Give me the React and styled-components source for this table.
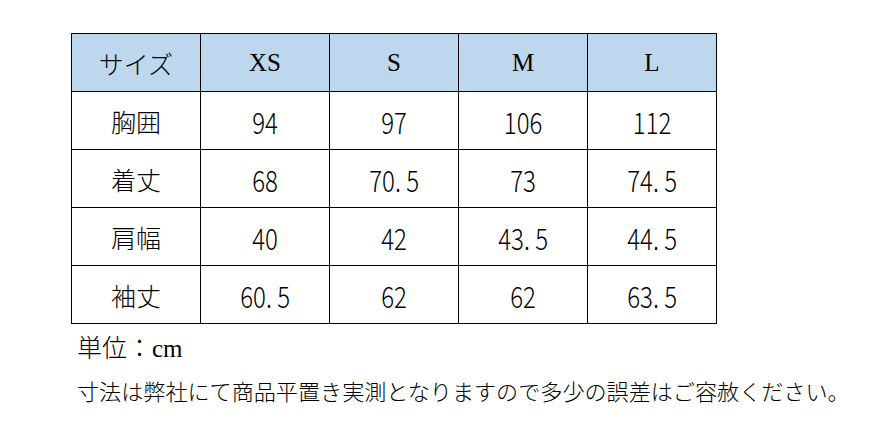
import React from 'react';
import styled, { createGlobalStyle } from 'styled-components';

const GlobalStyle = createGlobalStyle`
  html, body {
    margin: 0;
    padding: 0;
    background: #ffffff;
  }
`;

const Page = styled.div`
  padding: 33px 0 0 71px;
  width: 871px;
  height: 427px;
  box-sizing: border-box;
  color: #000;
`;

const Table = styled.table`
  border-collapse: collapse;
  table-layout: fixed;
`;

const Cell = styled.td`
  width: 128px;
  height: 57px;
  padding: 0;
  border: 1px solid #000;
  text-align: center;
  vertical-align: middle;
  background: ${(p) => (p.$head ? '#bdd7ee' : '#ffffff')};
`;

const HeadText = styled.span`
  font-family: 'Liberation Serif', 'Noto Sans CJK JP', serif;
  font-size: 25px;
  font-weight: 300;
`;

const Label = styled.span`
  font-family: 'Noto Sans CJK JP', sans-serif;
  font-size: 25px;
  font-weight: 300;
`;

const Num = styled.span`
  display: inline-block;
  font-family: 'Noto Sans CJK JP', sans-serif;
  font-size: 30px;
  font-weight: 300;
  transform: scaleX(0.8);
  white-space: pre;
`;

const Unit = styled.div`
  margin-top: 4px;
  margin-left: 6px;
  font-family: 'Liberation Serif', 'Noto Sans CJK JP', serif;
  font-size: 25px;
  font-weight: 300;
`;

const Note = styled.div`
  margin-top: 10px;
  margin-left: 6px;
  font-family: 'Noto Sans CJK JP', sans-serif;
  font-size: 22.1px;
  font-weight: 300;
  white-space: nowrap;
`;

const sizes = ['XS', 'S', 'M', 'L'];
const rows = [
  ['胸囲', '94', '97', '106', '112'],
  ['着丈', '68', '70. 5', '73', '74. 5'],
  ['肩幅', '40', '42', '43. 5', '44. 5'],
  ['袖丈', '60. 5', '62', '62', '63. 5'],
];

export default function App() {
  return (
    <Page>
      <GlobalStyle />
      <Table>
        <tbody>
          <tr>
            <Cell $head>
              <HeadText>サイズ</HeadText>
            </Cell>
            {sizes.map((s) => (
              <Cell $head key={s}>
                <HeadText>{s}</HeadText>
              </Cell>
            ))}
          </tr>
          {rows.map(([label, ...vals]) => (
            <tr key={label}>
              <Cell>
                <Label>{label}</Label>
              </Cell>
              {vals.map((v, i) => (
                <Cell key={i}>
                  <Num>{v}</Num>
                </Cell>
              ))}
            </tr>
          ))}
        </tbody>
      </Table>
      <Unit>単位：cm</Unit>
      <Note>寸法は弊社にて商品平置き実測となりますので多少の誤差はご容赦ください。</Note>
    </Page>
  );
}
